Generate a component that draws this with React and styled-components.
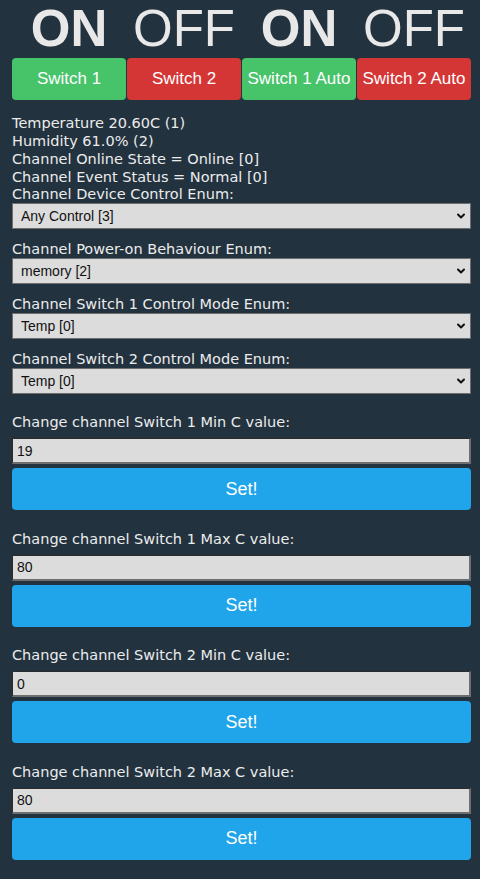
import { useState } from "react";
import styled, { createGlobalStyle } from "styled-components";
import { ChevronDown } from "lucide-react";

const GlobalStyle = createGlobalStyle`
  html, body {
    margin: 0;
    padding: 0;
    background: #22323f;
  }
  body {
    font-family: "DejaVu Sans", Verdana, sans-serif;
    color: #ececec;
  }
`;

const Page = styled.div`
  padding: 0 9px 20px 12px;
  min-height: 879px;
  box-sizing: border-box;
`;

const StateRow = styled.div`
  display: grid;
  grid-template-columns: repeat(4, 1fr);
  column-gap: 1px;
`;

const StateText = styled.div`
  font-family: "Liberation Sans", Arial, sans-serif;
  font-size: 51px;
  line-height: 58px;
  text-align: center;
  color: #e8e8e8;
  font-weight: ${(p) => (p.$on ? 700 : 400)};
`;

const ToggleButton = styled.button`
  height: 42px;
  border: none;
  border-radius: 4px;
  padding: 0;
  background: ${(p) => (p.$on ? "#47c36a" : "#d43535")};
  color: #fff;
  font-family: "Liberation Sans", Arial, sans-serif;
  font-size: 17px;
  white-space: nowrap;
  cursor: pointer;
`;

const Info = styled.div`
  margin-top: 14px;
  font-size: 14.5px;
  line-height: 18px;
`;

const FieldLabel = styled.div`
  font-size: 14.5px;
  line-height: 17px;
`;

const SelectGroup = styled.div`
  margin-bottom: 12px;
`;

const SelectWrap = styled.div`
  position: relative;
`;

const Select = styled.select`
  display: block;
  width: 100%;
  height: 26px;
  box-sizing: border-box;
  appearance: none;
  background: #dcdcdc;
  border: 1px solid #6e6e6e;
  border-radius: 0;
  padding: 0 24px 0 8px;
  font-family: "Liberation Sans", Arial, sans-serif;
  font-size: 14px;
  color: #111;
`;

const Chevron = styled(ChevronDown)`
  position: absolute;
  right: 4px;
  top: 7px;
  pointer-events: none;
  color: #111;
`;

const ValueSection = styled.div`
  margin-top: ${(p) => (p.$first ? "19px" : "19.5px")};
`;

const ValueLabel = styled.div`
  font-size: 14.5px;
  line-height: 18px;
  margin-bottom: 7px;
`;

const NumberInput = styled.input`
  display: block;
  width: 100%;
  height: 26px;
  box-sizing: border-box;
  background: #dcdcdc;
  border-style: solid;
  border-width: 1px 2px 2px 1px;
  border-color: #2b2b2b #6e6e6e #6e6e6e #2b2b2b;
  padding: 0 4px;
  font-family: "Liberation Sans", Arial, sans-serif;
  font-size: 14px;
  color: #111;
`;

const SetButton = styled.button`
  display: block;
  width: 100%;
  height: 42px;
  margin-top: 4px;
  border: none;
  border-radius: 4px;
  background: #20a4ea;
  color: #fff;
  font-family: "Liberation Sans", Arial, sans-serif;
  font-size: 18px;
  cursor: pointer;
`;

const selects = [
  { label: "Channel Device Control Enum:", value: "Any Control [3]", options: ["Any Control [3]", "Local Only [0]", "Remote Only [1]"] },
  { label: "Channel Power-on Behaviour Enum:", value: "memory [2]", options: ["off [0]", "on [1]", "memory [2]"] },
  { label: "Channel Switch 1 Control Mode Enum:", value: "Temp [0]", options: ["Temp [0]", "Humidity [1]"] },
  { label: "Channel Switch 2 Control Mode Enum:", value: "Temp [0]", options: ["Temp [0]", "Humidity [1]"] },
];

const values = [
  { label: "Change channel Switch 1 Min C value:", value: "19" },
  { label: "Change channel Switch 1 Max C value:", value: "80" },
  { label: "Change channel Switch 2 Min C value:", value: "0" },
  { label: "Change channel Switch 2 Max C value:", value: "80" },
];

export default function App() {
  const [switches] = useState([true, false, true, false]);
  const names = ["Switch 1", "Switch 2", "Switch 1 Auto", "Switch 2 Auto"];

  return (
    <>
      <GlobalStyle />
      <Page>
        <StateRow>
          {switches.map((on, i) => (
            <StateText key={i} $on={on}>{on ? "ON" : "OFF"}</StateText>
          ))}
        </StateRow>
        <StateRow>
          {names.map((n, i) => (
            <ToggleButton key={n} $on={switches[i]}>{n}</ToggleButton>
          ))}
        </StateRow>

        <Info>
          <div>Temperature 20.60C (1)</div>
          <div>Humidity 61.0% (2)</div>
          <div>Channel Online State = Online [0]</div>
          <div>Channel Event Status = Normal [0]</div>
        </Info>

        {selects.map((s) => (
          <SelectGroup key={s.label}>
            <FieldLabel>{s.label}</FieldLabel>
            <SelectWrap>
              <Select defaultValue={s.value}>
                {s.options.map((o) => (
                  <option key={o}>{o}</option>
                ))}
              </Select>
              <Chevron size={12} strokeWidth={4} />
            </SelectWrap>
          </SelectGroup>
        ))}

        {values.map((v, i) => (
          <ValueSection key={v.label} $first={i === 0}>
            <ValueLabel>{v.label}</ValueLabel>
            <NumberInput type="text" defaultValue={v.value} />
            <SetButton>Set!</SetButton>
          </ValueSection>
        ))}
      </Page>
    </>
  );
}
